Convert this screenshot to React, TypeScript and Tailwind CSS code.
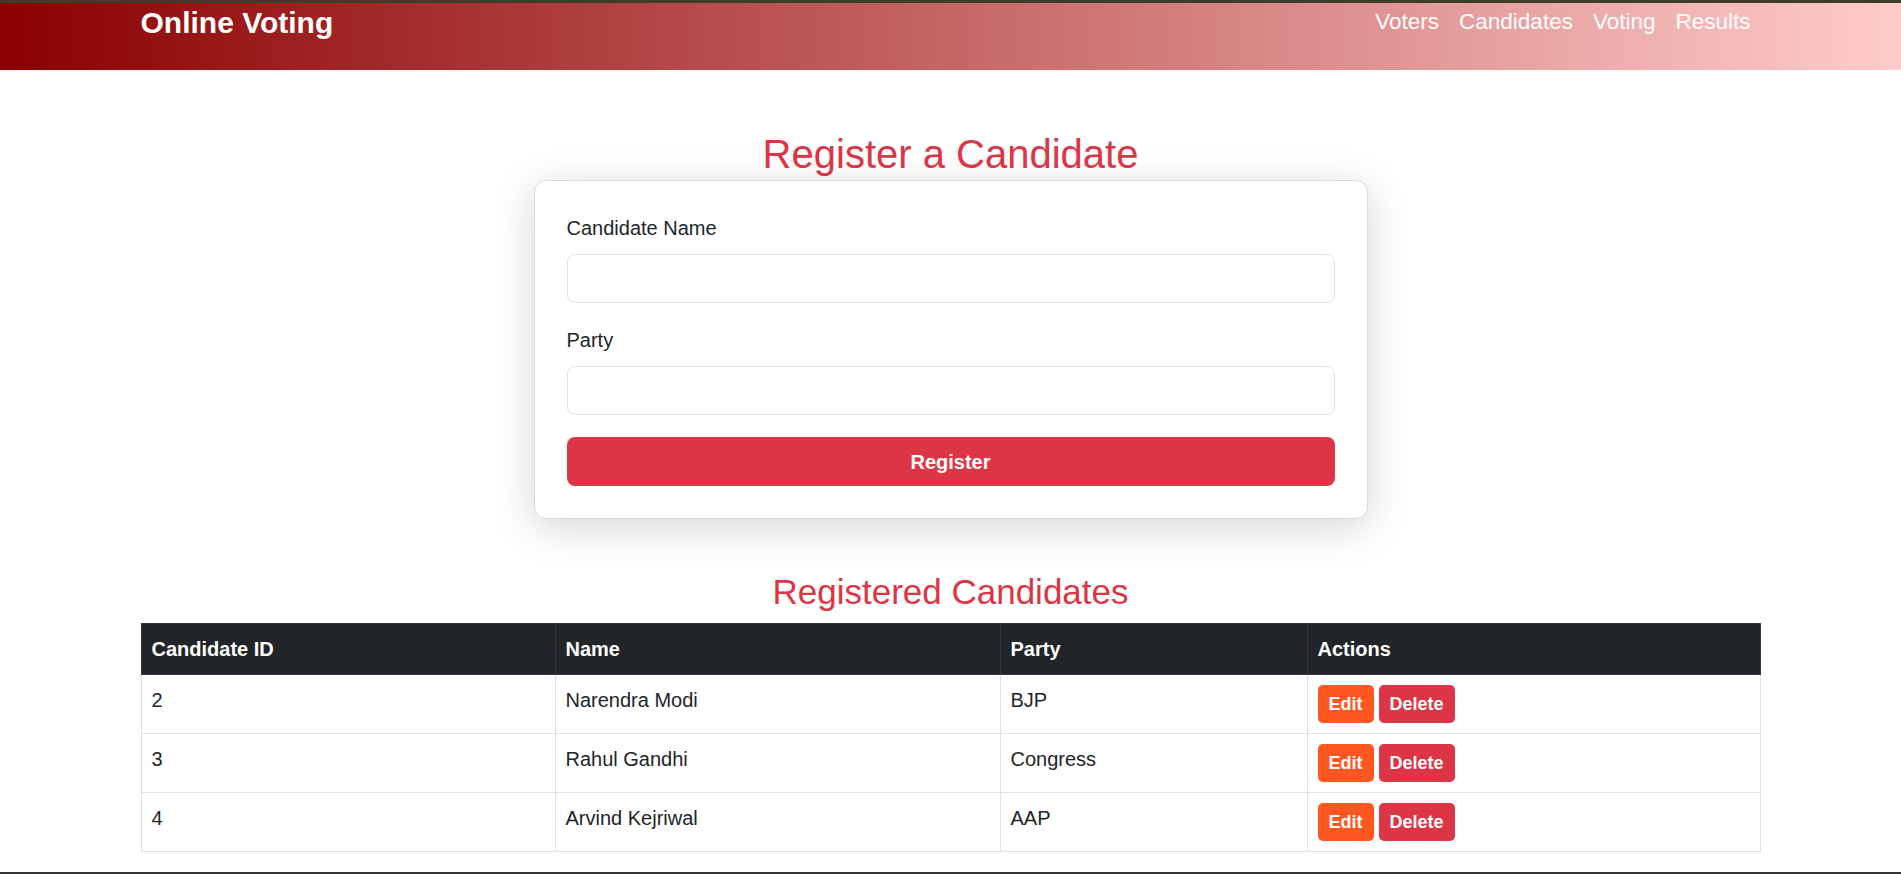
import React from 'react';

const candidates = [
  { id: 2, name: 'Narendra Modi', party: 'BJP' },
  { id: 3, name: 'Rahul Gandhi', party: 'Congress' },
  { id: 4, name: 'Arvind Kejriwal', party: 'AAP' },
];

export default function App() {
  return (
    <div className="min-h-screen bg-white font-['Liberation_Sans',Arial,sans-serif] text-[#212529]">
      {/* top strip + gradient header */}
      <div className="h-[3px] bg-[#3d3d29]" />
      <header className="h-[67px] bg-[linear-gradient(to_right,#8b0000,#ffcccb)]">
        <div className="max-w-[1620px] mx-auto h-[38px] flex items-center justify-between">
          <h1 className="text-[30px] leading-[35px] font-bold text-white">Online Voting</h1>
          <nav className="flex items-center">
            {['Voters', 'Candidates', 'Voting', 'Results'].map((link) => (
              <a key={link} href="#" className="px-[10px] text-[22.5px] leading-[34px] text-white">
                {link}
              </a>
            ))}
          </nav>
        </div>
      </header>

      <main className="max-w-[1620px] mx-auto pt-[60px]">
        {/* register form */}
        <h2 className="text-center text-[40px] leading-[48px] text-[#dc3545] mb-[2px]">Register a Candidate</h2>
        <div className="w-[834px] mx-auto bg-white border border-[#dadada] rounded-[12px] p-[32px] shadow-[0_8px_40px_rgba(0,0,0,0.17)]">
          <div className="mb-[22px]">
            <label className="block text-[20px] leading-[30px] mb-[11px]">Candidate Name</label>
            <input type="text" className="block w-full h-[49px] px-[15px] text-[20px] border border-[#dee2e6] rounded-[8px] bg-white outline-none" />
          </div>
          <div className="mb-[22px]">
            <label className="block text-[20px] leading-[30px] mb-[11px]">Party</label>
            <input type="text" className="block w-full h-[49px] px-[15px] text-[20px] border border-[#dee2e6] rounded-[8px] bg-white outline-none" />
          </div>
          <button className="w-full h-[49px] bg-[#dc3545] text-white text-[20px] font-bold rounded-[8px]">Register</button>
        </div>

        {/* candidates table */}
        <h2 className="mt-[52px] mb-[10px] text-center text-[35px] leading-[42px] text-[#dc3545]">Registered Candidates</h2>
        <table className="w-full table-fixed border-collapse text-[20px] leading-[30px]">
          <thead>
            <tr className="bg-[#212529] text-white">
              <th className="w-[414px] p-[10px] text-left font-bold border border-[#32383e]">Candidate ID</th>
              <th className="w-[445px] p-[10px] text-left font-bold border border-[#32383e]">Name</th>
              <th className="w-[307px] p-[10px] text-left font-bold border border-[#32383e]">Party</th>
              <th className="p-[10px] text-left font-bold border border-[#32383e]">Actions</th>
            </tr>
          </thead>
          <tbody>
            {candidates.map((c) => (
              <tr key={c.id}>
                <td className="p-[10px] align-top border border-[#dee2e6]">{c.id}</td>
                <td className="p-[10px] align-top border border-[#dee2e6]">{c.name}</td>
                <td className="p-[10px] align-top border border-[#dee2e6]">{c.party}</td>
                <td className="p-[10px] align-top border border-[#dee2e6]">
                  <div className="flex gap-[5px]">
                    <button className="h-[38px] px-[11px] rounded-[5px] bg-[#ff5722] text-white text-[18px] font-bold">Edit</button>
                    <button className="h-[38px] px-[11px] rounded-[5px] bg-[#dc3545] text-white text-[18px] font-bold">Delete</button>
                  </div>
                </td>
              </tr>
            ))}
          </tbody>
        </table>
      </main>

      <footer className="mt-[20px] h-[40px] bg-[#343434]" />
    </div>
  );
}
